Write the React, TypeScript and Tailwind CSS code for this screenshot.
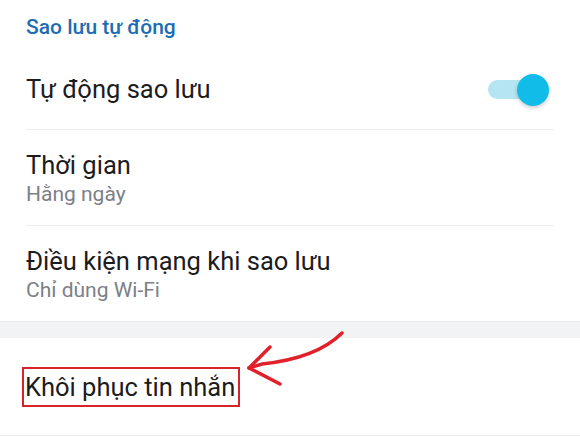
export default function App() {
  return (
    <div
      className="relative w-[580px] h-[437px] bg-white overflow-hidden flex flex-col"
      style={{ fontFamily: "Roboto, 'Noto Sans', sans-serif" }}
    >
      {/* section header */}
      <div className="h-[60px] pl-[26px] pb-[4px] flex items-center">
        <span className="text-[21px] font-medium text-[#1d6db4]">Sao lưu tự động</span>
      </div>

      {/* auto backup toggle */}
      <div className="mx-[26px] h-[70px] pb-[10px] border-b border-[#ebecee] flex items-center justify-between">
        <span className="text-[25.5px] text-[#1c1c1e]">Tự động sao lưu</span>
        <div className="relative w-[66px] h-[34px] flex items-center">
          <div className="absolute left-0 w-[42px] h-[19px] rounded-full bg-[#b5e5f3]" />
          <div className="absolute left-[29px] w-[32px] h-[32px] rounded-full bg-[#11bde8] shadow-[0_2px_4px_rgba(0,0,0,0.2)]" />
        </div>
      </div>

      {/* schedule */}
      <div className="mx-[26px] h-[96px] border-b border-[#ebecee] flex flex-col justify-center">
        <span className="text-[25.5px] leading-[32px] text-[#1c1c1e]">Thời gian</span>
        <span className="text-[21px] leading-[26px] text-[#7b8087]">Hằng ngày</span>
      </div>

      {/* network */}
      <div className="mx-[26px] h-[95px] flex flex-col justify-center">
        <span className="text-[25.5px] leading-[32px] text-[#1c1c1e]">Điều kiện mạng khi sao lưu</span>
        <span className="text-[21px] leading-[26px] text-[#7b8087]">Chỉ dùng Wi-Fi</span>
      </div>

      <div className="h-[17px] bg-[#f2f3f5] border-t border-[#e8e9eb]" />

      {/* restore */}
      <div className="h-[98px] pl-[22px] border-b border-[#ebecee] flex items-center">
        <span className="border-2 border-[#d8232a] pl-[1px] pr-[3px] leading-[36px] text-[25.5px] text-[#1c1c1e]">
          Khôi phục tin nhắn
        </span>
      </div>

      {/* hand-drawn arrow annotation */}
      <svg className="absolute left-0 top-0 pointer-events-none" width="580" height="437">
        <path
          d="M342 333 C 325 350, 300 360, 262 364 L 249 368"
          fill="none"
          stroke="#e0202a"
          strokeWidth="3.5"
          strokeLinecap="round"
        />
        <path
          d="M270 347 L 249 368 L 280 384"
          fill="none"
          stroke="#e0202a"
          strokeWidth="3.5"
          strokeLinecap="round"
          strokeLinejoin="round"
        />
      </svg>
    </div>
  )
}
